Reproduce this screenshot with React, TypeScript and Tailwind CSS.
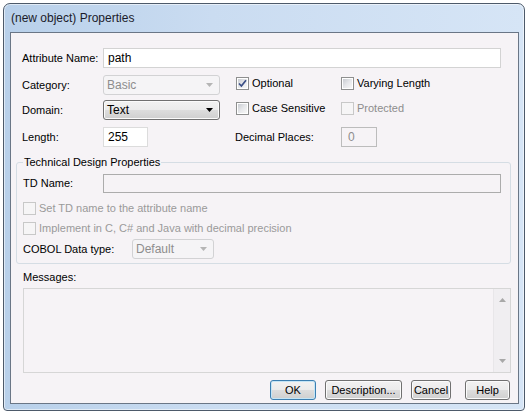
import React from "react";

const F = "font-['Liberation_Sans',Arial,sans-serif]";

function Check({ checked = false, disabled = false }: { checked?: boolean; disabled?: boolean }) {
  return (
    <span
      className={
        disabled
          ? "w-[13px] h-[13px] shrink-0 border border-[#c8c8c8] bg-[#f6f5f6] p-[2px] flex"
          : "w-[13px] h-[13px] shrink-0 border border-[#8e8f8f] bg-white p-[1px] flex"
      }
    >
      <span
        className={
          disabled
            ? "flex-1 bg-[#f6f5f6]"
            : "flex-1 bg-[linear-gradient(135deg,#c9ccd2_0%,#e6e7ea_50%,#f7f7f7_100%)] flex items-center justify-center"
        }
      >
        {checked && (
          <svg width="9" height="9" viewBox="0 0 9 9">
            <path d="M1 4.5 L3.4 7 L8 1.2" fill="none" stroke="#3b4f86" strokeWidth="1.7" />
          </svg>
        )}
      </span>
    </span>
  );
}

function Arrow({ color }: { color: string }) {
  return (
    <svg width="7" height="4" viewBox="0 0 7 4">
      <path d="M0 0 H7 L3.5 4 Z" fill={color} />
    </svg>
  );
}

function Btn({ label, w, def = false }: { label: string; w: string; def?: boolean }) {
  return (
    <div
      className={
        (def
          ? "border-[#3c7fb1] shadow-[inset_0_0_0_1px_#c4e5f6] "
          : "border-[#707070] shadow-[inset_0_0_0_1px_#fbfbfb] ") +
        w +
        " h-[20px] border rounded-[3px] bg-[linear-gradient(to_bottom,#f2f2f2_0%,#ebebeb_50%,#dddddd_51%,#cfcfcf_100%)] flex items-center justify-center text-[11px] text-black"
      }
    >
      {label}
    </div>
  );
}

export default function App() {
  return (
    <div className={"w-[528px] h-[414px] bg-white pt-[3px] pl-[3px] " + F}>
      <div className="w-[522px] h-[408px] border border-[#4d5a6a] rounded-t-[7px] rounded-b-[4px] bg-[linear-gradient(to_right,#b8d0ea_0%,#cadcf1_40%,#d6e5f6_100%)] shadow-[inset_0_0_0_1px_rgba(255,255,255,0.55)] flex flex-col pl-[6px] pr-[5px] pb-[6px]">
        <div className="h-[28px] flex items-center pl-[1px] text-[12px] text-[#1b1b2a]">(new object) Properties</div>
        <div className="flex-1 border border-[#6a7686] bg-[#f6f3f6] flex flex-col text-[11px] leading-[13px] text-black">
          {/* Row 1 */}
          <div className="mt-[15px] ml-[11px] h-[20px] flex items-center">
            <span className="w-[81px]">Attribute Name:</span>
            <div className="w-[398px] h-[20px] border border-[#d3d3d3] bg-white flex items-center pl-[4px] text-[12px]">path</div>
          </div>
          {/* Row 2 */}
          <div className="mt-[7px] ml-[11px] h-[20px] flex items-start">
            <span className="w-[81px] self-center">Category:</span>
            <div className="w-[117px] h-[20px] border border-[#d2d2d4] rounded-[3px] bg-[#f5f4f6] flex items-center justify-between pl-[3px] pr-[6px] text-[12px] text-[#8d8d8d]">
              <span>Basic</span>
              <Arrow color="#b5b5b5" />
            </div>
            <div className="ml-[16px] w-[105px] mt-[2px] flex items-center">
              <Check checked />
              <span className="ml-[3px]">Optional</span>
            </div>
            <div className="mt-[2px] flex items-center">
              <Check />
              <span className="ml-[3px]">Varying Length</span>
            </div>
          </div>
          {/* Row 3 */}
          <div className="mt-[5px] ml-[11px] h-[20px] flex items-start">
            <span className="w-[81px] self-center">Domain:</span>
            <div className="w-[117px] h-[20px] border border-[#707070] rounded-[3px] bg-[linear-gradient(to_bottom,#f2f2f2_0%,#ebebeb_50%,#dddddd_51%,#cfcfcf_100%)] shadow-[inset_0_0_0_1px_#fbfbfb] flex items-center justify-between pl-[3px] pr-[6px] text-[12px]">
              <span>Text</span>
              <Arrow color="#000000" />
            </div>
            <div className="ml-[16px] w-[105px] mt-[2px] flex items-center">
              <Check />
              <span className="ml-[3px]">Case Sensitive</span>
            </div>
            <div className="mt-[2px] flex items-center">
              <Check disabled />
              <span className="ml-[3px] text-[#8d8d8d]">Protected</span>
            </div>
          </div>
          {/* Row 4 */}
          <div className="mt-[7px] ml-[11px] h-[20px] flex items-center">
            <span className="w-[81px]">Length:</span>
            <div className="w-[45px] h-[20px] border border-[#dcdcdc] bg-white flex items-center pl-[4px] text-[12px]">255</div>
            <span className="ml-[87px] w-[106px]">Decimal Places:</span>
            <div className="w-[36px] h-[20px] border border-[#bcbcbc] bg-[#f6f3f6] flex items-center pl-[6px] text-[12px] text-[#8d8d8d]">0</div>
          </div>
          {/* Group */}
          <fieldset className="mt-[9px] ml-[5px] w-[495px] border border-[#d5dde4] rounded-[3px] px-[6px] pb-[4px]">
            <legend className="px-[1px] text-[11px] leading-[13px]">Technical Design Properties</legend>
            <div className="mt-[5px] h-[19px] flex items-center">
              <span className="w-[80px]">TD Name:</span>
              <div className="w-[398px] h-[19px] border border-[#acacac] bg-[#f6f3f6]"></div>
            </div>
            <div className="mt-[8px] h-[14px] flex items-center">
              <Check disabled />
              <span className="ml-[3px] text-[#9a9a9a]">Set TD name to the attribute name</span>
            </div>
            <div className="mt-[6px] h-[14px] flex items-center">
              <Check disabled />
              <span className="ml-[3px] text-[#9a9a9a]">Implement in C, C# and Java with decimal precision</span>
            </div>
            <div className="mt-[4px] h-[20px] flex items-center">
              <span className="w-[109px]">COBOL Data type:</span>
              <div className="w-[82px] h-[20px] border border-[#d2d2d4] rounded-[3px] bg-[#f5f4f6] flex items-center justify-between pl-[3px] pr-[6px] text-[12px] text-[#8d8d8d]">
                <span>Default</span>
                <Arrow color="#b5b5b5" />
              </div>
            </div>
          </fieldset>
          {/* Messages */}
          <div className="mt-[7px] ml-[12px]">Messages:</div>
          <div className="mt-[4px] ml-[12px] w-[488px] h-[85px] border border-[#d6d6d6] bg-[#f6f3f6] flex justify-end">
            <div className="w-[17px] h-full bg-[#f0eef1] border-l border-[#e8e6e9] flex flex-col items-center justify-between py-[9px]">
              <svg width="7" height="4" viewBox="0 0 7 4">
                <path d="M0 4 H7 L3.5 0 Z" fill="#a8a8a8" />
              </svg>
              <Arrow color="#a8a8a8" />
            </div>
          </div>
          {/* Buttons */}
          <div className="mt-[7px] flex justify-end pr-[8px]">
            <Btn label="OK" w="w-[46px]" def />
            <div className="ml-[9px]"><Btn label="Description..." w="w-[77px]" /></div>
            <div className="ml-[9px]"><Btn label="Cancel" w="w-[40px]" /></div>
            <div className="ml-[14px]"><Btn label="Help" w="w-[45px]" /></div>
          </div>
        </div>
      </div>
    </div>
  );
}
